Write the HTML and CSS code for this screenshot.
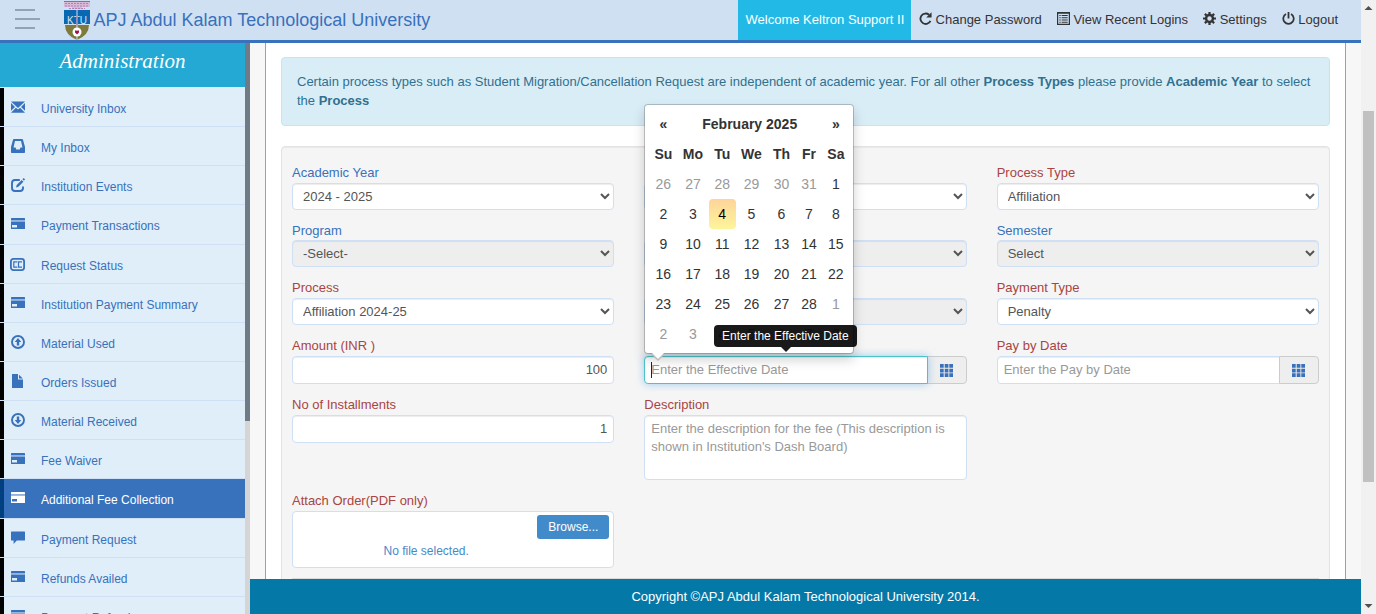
FILE: index.html
```
<!DOCTYPE html>
<html lang="en">
<head>
<meta charset="utf-8">
<title>APJ Abdul Kalam Technological University</title>
<link rel="stylesheet" href="styles.css">
</head>
<body>
<svg class="defs" width="0" height="0">
  <symbol id="mail" viewBox="0 0 14 14"><path d="M0 1.500h14L7 8zM0 3v7.700l4-3.800zM14 3v7.700l-4-3.800zM0 12.800l4.900-5L7 9.600l2.100-1.800 4.900 5z"/></symbol>
  <symbol id="inbox" viewBox="0 0 14 14"><path fill-rule="evenodd" d="M3 0h8q.8 0 1 .8L14 8v5.200q0 .8-.8.8H.8Q0 14 0 13.200V8L2 .8Q2.200 0 3 0zM4 2L2.500 8.500H4.500L5.300 10.500h3.400l.8-2H11.500L10 2z"/></symbol>
  <symbol id="edit" viewBox="0 0 14 14"><path fill="none" stroke="currentColor" stroke-width="1.900" d="M8.800 2H4Q1 2 1 5v5q0 3 3 3h5q3 0 3-3V8.600"/><path d="M5 9.600l.7-2.500 5-5 1.700 1.700-5 5zM11.500 1.300L12.700 0 14 1.300l-1 1.400z"/></symbol>
  <symbol id="card" viewBox="0 0 14 14"><path d="M.5 1h13q.5 0 .5.500V3H0V1.500Q0 1 .5 1z"/><path opacity=".45" d="M0 3h14v1.800H0z"/><path fill-rule="evenodd" d="M0 4.800h14v6.700q0 .5-.5.5H.500Q0 12 0 11.500zM1 8v2.400h5V8z"/></symbol>
  <symbol id="cc" viewBox="0 0 15 14"><rect x=".9" y="1.900" width="13.200" height="11.200" rx="2.500" fill="none" stroke="currentColor" stroke-width="1.800"/><path fill="none" stroke="currentColor" stroke-width="1.200" d="M6.700 5.600V4.900H3.800v5.200h2.900V9.400M11.400 5.600V4.900H8.500v5.200h2.900V9.400"/></symbol>
  <symbol id="up" viewBox="0 0 14 14"><circle cx="7" cy="7" r="6" fill="none" stroke="currentColor" stroke-width="1.900"/><path d="M7 3l3.300 4H8.200v3.500H5.800V7H3.700z"/></symbol>
  <symbol id="down" viewBox="0 0 14 14"><circle cx="7" cy="7" r="6" fill="none" stroke="currentColor" stroke-width="1.900"/><path d="M7 11L3.700 7h2.100V3.500h2.400V7h2.100z"/></symbol>
  <symbol id="file" viewBox="0 0 14 14"><path d="M1 0h6v5.500h5V14H1zM8 .8l3.800 3.800H8z"/></symbol>
  <symbol id="chat" viewBox="0 0 14 14"><path d="M.6 .5h12.800q.6 0 .6.600v7.800q0 .6-.6.6H5.800L2.600 13V9.500H.6Q0 9.500 0 8.900V1.100Q0 .5.6.5z"/></symbol>
  <symbol id="refresh" viewBox="0 0 14 14"><path fill="none" stroke="currentColor" stroke-width="2" d="M10.800 3A5.600 5.600 0 1 0 12.300 9.500"/><path d="M13.500 .3V6H7.800z"/></symbol>
  <symbol id="list" viewBox="0 0 14 14"><path fill-rule="evenodd" d="M0 0h14v14H0zM1.300 1.800v10.900h11.400V1.800z"/><path d="M2.500 3.200h1.500v1.200H2.500zM5 3.200h6.500v1.200H5zM2.500 5.600h1.500v1.200H2.500zM5 5.600h6.500v1.200H5zM2.500 8h1.500v1.200H2.500zM5 8h6.500v1.200H5zM2.500 10.400h1.500v1.200H2.500zM5 10.400h6.500v1.200H5z"/></symbol>
  <symbol id="cog" viewBox="0 0 14 14"><circle cx="7" cy="7" r="3.700" fill="none" stroke="currentColor" stroke-width="2.600"/><path fill="none" stroke="currentColor" stroke-width="2.400" d="M7 0v2.500M7 11.500V14M0 7h2.500M11.500 7H14M2 2l1.800 1.800M10.200 10.200L12 12M12 2l-1.800 1.800M3.800 10.200L2 12"/></symbol>
  <symbol id="power" viewBox="0 0 14 14"><path fill="none" stroke="currentColor" stroke-width="1.900" d="M4.300 2.200A5.600 5.600 0 1 0 9.700 2.200M7 0v7"/></symbol>
  <symbol id="grid" viewBox="0 0 13 13"><path d="M0 0h3.700v3.700H0zM4.700 0h3.700v3.700H4.700zM9.300 0H13v3.700H9.300zM0 4.700h3.700v3.700H0zM4.700 4.700h3.700v3.700H4.700zM9.300 4.700H13v3.700H9.300zM0 9.300h3.700V13H0zM4.700 9.300h3.700V13H4.700zM9.300 9.300H13V13H9.300z"/></symbol>
</svg>
<div class="window">
  <div class="app">
    <header class="topbar">
      <div class="burger"><i></i><i class="long"></i><i></i></div>
      <svg class="crest" viewBox="0 0 26 39">
        <path fill="#d7bad8" d="M0 0h26v6H18v2H8V6H0z"/>
        <path fill="none" stroke="#b27fb8" stroke-width="1" stroke-dasharray="2 1" d="M1 2.500h24M1 5h24M5 7.500h16"/>
        <path fill="#3f8fc4" d="M0 0h26v1H0z"/>
        <path fill="#0a67b2" d="M0 9h26v14H0z"/>
        <path fill="#7d7a3c" d="M1 24h24Q25 34 13 39 1 34 1 24z"/>
        <path fill="#d0e0f3" d="M12.500 9h1v30h-1z"/>
        <text class="crest-text" x="13" y="23" text-anchor="middle">KTU</text>
        <path stroke="#a0285c" stroke-width=".8" d="M13 15v9"/>
        <circle cx="13" cy="31" r="4.500" fill="#fff"/>
        <path fill="#a0144f" d="M11 29.500h1.500l.5.500.5-.5H15v2L13 33.500l-2-2z"/>
      </svg>
      <h1 class="brand">APJ Abdul Kalam Technological University</h1>
      <nav class="topnav">
        <a class="welcome">Welcome Keltron Support II</a>
        <a><svg class="ico"><use href="#refresh"/></svg>Change Password</a>
        <a><svg class="ico"><use href="#list"/></svg>View Recent Logins</a>
        <a><svg class="ico"><use href="#cog"/></svg>Settings</a>
        <a><svg class="ico"><use href="#power"/></svg>Logout</a>
      </nav>
    </header>
    <div class="body">
      <aside class="sidebar">
        <div class="menu">
          <h2 class="menu-title">Administration</h2>
          <ul>
            <li><a><svg><use href="#mail"/></svg>University Inbox</a></li>
            <li><a><svg><use href="#inbox"/></svg>My Inbox</a></li>
            <li><a><svg><use href="#edit"/></svg>Institution Events</a></li>
            <li><a><svg><use href="#card"/></svg>Payment Transactions</a></li>
            <li><a><svg class="wide"><use href="#cc"/></svg>Request Status</a></li>
            <li><a><svg><use href="#card"/></svg>Institution Payment Summary</a></li>
            <li><a><svg><use href="#up"/></svg>Material Used</a></li>
            <li><a><svg><use href="#file"/></svg>Orders Issued</a></li>
            <li><a><svg><use href="#down"/></svg>Material Received</a></li>
            <li><a><svg><use href="#card"/></svg>Fee Waiver</a></li>
            <li><a class="active"><svg><use href="#card"/></svg>Additional Fee Collection</a></li>
            <li><a><svg><use href="#chat"/></svg>Payment Request</a></li>
            <li><a><svg><use href="#card"/></svg>Refunds Availed</a></li>
            <li><a><svg><use href="#card"/></svg>Payment Refund</a></li>
          </ul>
        </div>
        <div class="menu-track"><div class="menu-thumb"></div></div>
      </aside>
      <div class="main">
        <div class="scroll">
          <div class="page">
            <div class="alert">Certain process types such as Student Migration/Cancellation Request are independent of academic year. For all other <b>Process Types</b> please provide <b>Academic Year</b> to select the <b>Process</b></div>
            <form class="well">
              <div class="fields">
                <div><label>Academic Year</label><select><option>2024 - 2025</option></select></div>
                <div><select class="bare"><option></option></select></div>
                <div><label class="req">Process Type</label><select><option>Affiliation</option></select></div>
                <div><label class="low">Program</label><select class="off"><option>-Select-</option></select></div>
                <div><select class="off bare"><option></option></select></div>
                <div><label class="low">Semester</label><select class="off"><option>Select</option></select></div>
                <div><label class="req">Process</label><select><option>Affiliation 2024-25</option></select></div>
                <div><select class="off bare"><option></option></select></div>
                <div><label class="req">Payment Type</label><select><option>Penalty</option></select></div>
                <div><label class="req">Amount (INR )</label><input class="num" value="100"></div>
                <div class="date">
                  <div class="group bare"><input class="focus" placeholder="Enter the Effective Date"><span class="addon"><svg><use href="#grid"/></svg></span></div>
                  <i class="caret"></i>
                  <div class="picker">
                    <table>
                      <colgroup><col class="c1"><col class="c2"><col class="c3"><col class="c4"><col class="c5"><col class="c6"><col class="c7"></colgroup>
                      <tr><th>«</th><th colspan="5">February 2025</th><th>»</th></tr>
                      <tr><th>Su</th><th>Mo</th><th>Tu</th><th>We</th><th>Th</th><th>Fr</th><th>Sa</th></tr>
                      <tr><td class="old">26</td><td class="old">27</td><td class="old">28</td><td class="old">29</td><td class="old">30</td><td class="old">31</td><td>1</td></tr>
                      <tr><td>2</td><td>3</td><td class="today">4</td><td>5</td><td>6</td><td>7</td><td>8</td></tr>
                      <tr><td>9</td><td>10</td><td>11</td><td>12</td><td>13</td><td>14</td><td>15</td></tr>
                      <tr><td>16</td><td>17</td><td>18</td><td>19</td><td>20</td><td>21</td><td>22</td></tr>
                      <tr><td>23</td><td>24</td><td>25</td><td>26</td><td>27</td><td>28</td><td class="old">1</td></tr>
                      <tr><td class="old">2</td><td class="old">3</td><td class="old">4</td><td class="old">5</td><td class="old">6</td><td class="old">7</td><td class="old">8</td></tr>
                    </table>
                  </div>
                  <div class="tip">Enter the Effective Date</div>
                </div>
                <div><label class="req">Pay by Date</label><div class="group"><input placeholder="Enter the Pay by Date"><span class="addon"><svg><use href="#grid"/></svg></span></div></div>
                <div><label class="req">No of Installments</label><input class="num" value="1"></div>
                <div><label class="req">Description</label><textarea placeholder="Enter the description for the fee (This description is shown in Institution's Dash Board)"></textarea></div>
                <div></div>
                <div><label class="req">Attach Order(PDF only)</label><div class="upload"><span class="browse">Browse...</span><span class="nofile">No file selected.</span></div></div>
              </div>
              <hr>
            </form>
          </div>
        </div>
        <footer>Copyright ©APJ Abdul Kalam Technological University 2014.</footer>
      </div>
    </div>
  </div>
  <div class="scrollbar">
    <svg viewBox="0 0 15 15"><path d="M3.500 10L7.500 6l4 4z"/></svg>
    <div class="thumb"></div>
    <svg viewBox="0 0 15 15"><path d="M3.500 5h8l-4 4z"/></svg>
  </div>
</div>
</body>
</html>
```
FILE: styles.css
```
* { box-sizing: border-box; }
body { margin: 0; overflow: hidden; font: 13px/18.57px "Liberation Sans", Arial, sans-serif; color: #333; }
.defs { display: none; }
svg { fill: currentColor; }
.window { display: flex; width: 1376px; height: 614px; }
.app { display: flex; flex-direction: column; width: 1361px; }

/* top bar */
.topbar { display: flex; height: 43px; background: #d0e0f3; border-bottom: 3px solid #3871bc; }
.burger { display: flex; flex-direction: column; gap: 7px; width: 64px; padding: 9px 0 0 15px; }
.burger i { width: 20px; height: 2px; background: #90a4b8; }
.burger .long { width: 25px; }
.crest { width: 26px; height: 39px; margin-top: 1px; }
.crest-text { font: 10px "Liberation Sans", sans-serif; fill: #d5e8f7; }
.brand { margin: 0 auto 0 3.500px; font-size: 18px; font-weight: normal; line-height: 40px; color: #3871bc; }
.topnav { display: flex; line-height: 39px; margin-right: 15.500px; }
.topnav a { display: flex; padding: 0 7.500px; }
.topnav .welcome { background: #23b9e6; color: #fff; padding: 0 7.200px; }
.ico { width: 13px; height: 13px; margin: 12px 3.600px 0 0; }

/* sidebar */
.body { display: flex; height: 571px; }
.sidebar { display: flex; width: 250px; overflow: hidden; }
.menu { width: 245px; background: #e0eef9; }
.menu-title { margin: 0 0 .96px; height: 44px; background: #23a9d3; color: #fff; font: italic 21px/36px "Liberation Serif", serif; text-align: center; }
.menu ul { margin: 0; padding: 0; list-style: none; }
.menu li { height: 39.143px; border-bottom: 1px solid #cfe0f5; }
.menu a { display: flex; height: 100%; padding: 2px 0 0 7px; border-left: 4px solid #000; font-size: 12px; line-height: 38px; color: #3871bc; }
.menu a svg { width: 14px; height: 14px; margin: 10px 16px 0 0; }
.menu a .wide { width: 15px; height: 14px; margin: 10px 16px 0 -1px; }
.menu .active { background: #3871bc; border-left-color: #004080; color: #fff; }
.menu-track { width: 5px; background: #d5d5d5; }
.menu-thumb { height: 378px; background: #6f7c88; }

/* content */
.main { display: flex; flex-direction: column; width: 1111px; }
.scroll { height: 536px; overflow: hidden; padding: 0 15px; background: #f7f7f7; }
.page { height: 700px; padding: 14px 15px; background: #fff; border: solid #75a9e5; border-width: 0 1px; }
.alert { height: 69px; padding: 15px; background: #d9edf7; border: 1px solid #bce8f1; border-radius: 4px; color: #31708f; }
.well { height: 520px; margin-top: 20px; padding: 17px 10px; background: #f5f5f5; border: 1px solid #e3e3e3; border-radius: 4px; box-shadow: inset 0 1px 1px rgba(0,0,0,.05); }
.fields { display: grid; grid-template-columns: repeat(3, 1fr); grid-template-rows: 57px 58px 58px 59px 96px 86px; column-gap: 30px; }
label { display: block; height: 19px; line-height: 17px; color: #3871bc; }
.req { color: #a94442; }
.low { line-height: 19px; }
select, input, textarea { display: block; width: 100%; height: 28px; margin: 0; padding: 4px 6px; background: #fff; border: 1px solid #cfe0f5; border-radius: 4px; box-shadow: inset 0 1px 1px rgba(0,0,0,.075); color: #555; font: 13px/18px "Liberation Sans", Arial, sans-serif; outline: 0; }
input { padding: 3px 6px 5px; }
select { height: 27px; }
.off { background: #eee; }
.bare { margin-top: 19px; }
.num { text-align: right; }
textarea { height: 65px; resize: none; }
::placeholder { color: #999; }
.group { display: flex; }
.group input { flex: 1; border-radius: 4px 0 0 4px; }
.addon { width: 40px; margin-left: -1px; height: 28px; padding: 7px 12px; background: #eee; border: 1px solid #ccc; border-radius: 0 4px 4px 0; color: #3871bc; }
.addon svg { display: block; width: 13px; height: 13px; }
.date { position: relative; }
.group .focus { position: relative; border-color: #4cc3c9; box-shadow: inset 0 1px 1px rgba(0,0,0,.075), 0 0 8px rgba(102,175,233,.6); }
.caret { position: absolute; left: 7px; top: 25px; width: 1px; height: 16px; background: #222; }
.upload { display: flex; flex-direction: column; height: 57px; padding: 3px 4px; background: #fff; border: 1px solid #cfe0f5; border-radius: 4px; font-size: 12px; }
.browse { align-self: flex-end; width: 72px; height: 24px; border-radius: 3px; background: #428bca; color: #fff; line-height: 24px; text-align: center; }
.nofile { margin: 3px 0 0 86.500px; color: #428bca; }
hr { margin: 0; border: 0; border-top: 1px solid #d9d9d9; }
footer { height: 35px; background: #0479a8; color: #fff; line-height: 35px; text-align: center; }

/* date picker */
.picker { position: absolute; z-index: 2; left: 0; top: -233px; width: 210px; height: 250px; padding: 4px; background: #fff; border: 1px solid rgba(0,0,0,.2); background-clip: padding-box; border-radius: 4px; box-shadow: 0 6px 12px rgba(0,0,0,.175); font-size: 14px; line-height: 20px; }
.picker::before, .picker::after { content: ""; position: absolute; border: solid transparent; }
.picker::before { left: 6px; bottom: -8px; border-width: 7px 7px 0; border-top-color: #bbb; }
.picker::after { left: 7px; bottom: -6px; border-width: 6px 6px 0; border-top-color: #fff; }
.picker table { width: 200.300px; table-layout: fixed; border-spacing: 0; }
.picker td, .picker th { height: 30px; padding: 0; text-align: center; color: #333; }
.picker .old { color: #999; }
.picker .today { color: #000; border-radius: 4px; background: linear-gradient(#fdd49a, #fdf59a); }
.c1 { width: 28px; }
.c2 { width: 31.300px; }
.c3 { width: 27.200px; }
.c4 { width: 31.300px; }
.c5 { width: 28.800px; }
.c6 { width: 26.200px; }
.c7 { width: 27.500px; }

.tip { position: absolute; z-index: 3; left: 69.500px; top: -12px; width: 143px; height: 22px; border-radius: 4px; background: rgba(0,0,0,.9); color: #fff; font-size: 12px; line-height: 22px; text-align: center; }
.tip::after { content: ""; position: absolute; left: 67px; top: 22px; border: solid transparent; border-width: 5px 5px 0; border-top-color: rgba(0,0,0,.9); }

/* window scrollbar */
.scrollbar { display: flex; flex-direction: column; width: 15px; background: #f1f1f1; color: #505050; }
.scrollbar svg { width: 15px; height: 15px; }
.thumb { width: 11px; height: 371px; margin: 96px 2px 117px; background: #c1c1c1; }
```
